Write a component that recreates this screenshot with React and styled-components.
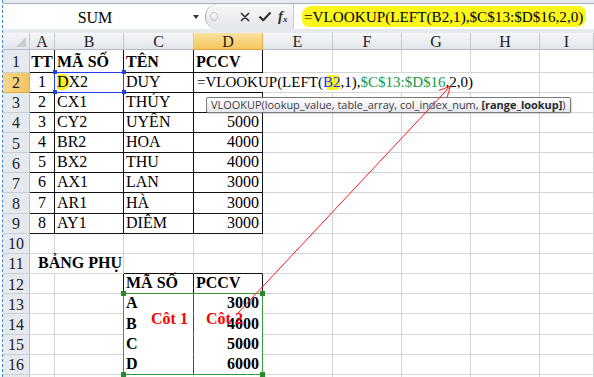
import React from 'react';
import styled, { createGlobalStyle } from 'styled-components';

const Global = createGlobalStyle`
  html, body { margin: 0; padding: 0; background: #fff; }
  body { width: 594px; height: 377px; overflow: hidden; font-family: "Liberation Serif", "Times New Roman", serif; }
`;

const SERIF = '"Liberation Serif", "Times New Roman", serif';
const GRID = '#d4d4d4';
const DARK = '#111';

const Root = styled.div`
  position: relative;
  width: 594px;
  height: 377px;
  overflow: hidden;
  padding-left: 2px;
  box-sizing: border-box;
  background: #fff;
`;

const Frame = styled.div`
  height: 100%;
  border-left: 1px dashed #3d86e0;
  display: flex;
  flex-direction: column;
`;

const FormulaBar = styled.div`
  flex: none;
  height: 33px;
  box-sizing: border-box;
  background: #e7eaee;
  padding: 3px 0 4px;
  display: flex;
`;

const BarRow = styled.div`
  flex: 1;
  display: flex;
  border-top: 1px solid #aab1b9;
  background: #fff;
`;

const NameBox = styled.div`
  width: 202px;
  display: flex;
  align-items: center;
  background: #fff;
`;

const NameText = styled.div`
  flex: 1;
  text-align: center;
  font: 400 16px/1 ${SERIF};
  color: #000;
  padding-top: 2px;
`;

const Drop = styled.div`
  width: 18px;
  display: flex;
  justify-content: center;
  &::before {
    content: '';
    border-left: 3.5px solid transparent;
    border-right: 3.5px solid transparent;
    border-top: 4px solid #333;
  }
`;

const Controls = styled.div`
  width: 88px;
  box-sizing: border-box;
  display: flex;
  align-items: center;
  background: linear-gradient(#f7f8fa, #e3e6ea);
  border-left: 1px solid #a9b0b8;
  border-radius: 12px 0 0 12px;
  padding-left: 4px;
`;

const Grip = styled.div`
  width: 6px;
  height: 7px;
  border-radius: 50%;
  border: 1px solid #c2c6cc;
  background: linear-gradient(#ffffff, #dfe2e6);
  margin-right: 18px;
`;

const IconBtn = styled.div`
  width: ${p => p.$w}px;
  display: flex;
  justify-content: center;
  align-items: center;
`;

const Fx = styled.div`
  font: italic 700 15px/1 ${SERIF};
  color: #333;
  margin-left: 2px;
  sub { font-size: 9px; font-style: italic; vertical-align: -1px; }
`;

const Input = styled.div`
  flex: 1;
  display: flex;
  align-items: center;
  border-left: 1px solid #c6cbd1;
  padding-left: 8px;
`;

const BigMark = styled.span`
  background: #fcf61a;
  border-radius: 9px 7px 9px 7px;
  padding: 2px 3px 1px 2px;
  font: 400 15.2px/18px ${SERIF};
  color: #000;
  white-space: nowrap;
`;

const Sheet = styled.div`
  flex: 1;
  display: grid;
  grid-template-columns: 27px 25px 69px 70px 69px 70px 69px 69px 69px 1fr;
  grid-template-rows: 17px 22.5px repeat(15, 20.17px) 1fr;
  position: relative;
`;

const Corner = styled.div`
  grid-row: 1;
  grid-column: 1;
  position: relative;
  background: linear-gradient(#f3f5f8, #e2e6eb);
  border-right: 1px solid #c4c9d0;
  border-bottom: 1px solid #b4bbc4;
  box-sizing: border-box;
  &::after {
    content: '';
    position: absolute;
    right: 3px;
    bottom: 2px;
    border-left: 10px solid transparent;
    border-bottom: 10px solid #c9ced5;
  }
`;

const ColHead = styled.div`
  grid-row: 1;
  grid-column: ${p => p.$c};
  box-sizing: border-box;
  display: flex;
  align-items: center;
  justify-content: center;
  background: ${p => (p.$active ? 'linear-gradient(#fbe3a0, #f5c55f)' : 'linear-gradient(#f5f7f9, #e2e6eb)')};
  border-right: 1px solid ${p => (p.$active ? '#e0ad4c' : '#c4c9d0')};
  border-bottom: 1px solid ${p => (p.$active ? '#e1a53b' : '#b4bbc4')};
  font: 400 16px/1 ${SERIF};
  color: #222;
  padding-top: 1px;
`;

const RowHead = styled.div`
  grid-row: ${p => p.$r};
  grid-column: 1;
  box-sizing: border-box;
  display: flex;
  align-items: center;
  justify-content: center;
  background: ${p => (p.$active ? 'linear-gradient(90deg, #f8d68a, #f3c463)' : '#e6e9ee')};
  border-right: 1px solid ${p => (p.$active ? '#e0a93f' : '#b7bec7')};
  border-bottom: 1px solid ${p => (p.$active ? '#e0a93f' : '#c9ced5')};
  font: 400 16px/1 ${SERIF};
  color: #222;
  padding-top: 2px;
`;

const Cell = styled.div`
  grid-row: ${p => p.$r};
  grid-column: ${p => p.$c} / span ${p => p.$span || 1};
  box-sizing: border-box;
  border-right: 1px solid ${p => p.$br};
  border-bottom: 1px solid ${p => p.$bb};
  display: flex;
  align-items: flex-end;
  justify-content: ${p => (p.$align === 'right' ? 'flex-end' : p.$align === 'center' ? 'center' : 'flex-start')};
  padding: 0 ${p => (p.$align === 'right' ? 3 : 2)}px 2px ${p => (p.$pl != null ? p.$pl : 2)}px;
  font: ${p => (p.$bold ? 700 : 400)} 16px/1 ${SERIF};
  color: #000;
  white-space: nowrap;
  min-width: 0;
`;

const Mark = styled.span`
  background: #f8f21e;
  border-radius: 3px 6px 6px 3px;
`;

const HalfMark = styled.span`
  color: #1a2ee8;
  background: linear-gradient(90deg, transparent 45%, #f8f21e 45%);
`;

const RefMark = styled.span`
  color: #1a2ee8;
  background: #f8f21e;
  border-radius: 0 4px 4px 0;
`;

const EditBox = styled.div`
  grid-row: 3;
  grid-column: 5 / span 4;
  margin-bottom: 1px;
  position: relative;
  z-index: 2;
  background: #fff;
  display: flex;
  align-items: flex-end;
  padding: 0 0 2px 3px;
  font: 400 15px/1 ${SERIF};
  color: #000;
  white-space: nowrap;
`;

const Ref = styled.span`
  color: ${p => p.$color};
`;

const Caret = styled.span`
  display: inline-block;
  width: 1px;
  height: 16px;
  background: #000;
  margin-left: 1px;
  vertical-align: -3px;
`;

const Tip = styled.div`
  position: absolute;
  left: 12px;
  top: calc(100% + 5px);
  height: 16px;
  box-sizing: border-box;
  padding: 0 4px;
  border: 1px solid #7a7a7a;
  border-radius: 2px;
  background: linear-gradient(#ffffff, #e6e7ef);
  box-shadow: 1px 1px 1px rgba(0, 0, 0, 0.15);
  font: 400 10.95px/14px "Open Sans", "Noto Sans", sans-serif;
  color: #3c3c3c;
  white-space: nowrap;
  b { font-weight: 700; color: #2a2a2a; }
`;

const RangeBox = styled.div`
  grid-row: ${p => p.$r};
  grid-column: ${p => p.$c};
  margin: -1px 0 0 -1px;
  position: relative;
  z-index: 3;
  pointer-events: none;
  box-sizing: border-box;
  border: ${p => p.$w}px solid ${p => p.$color};
`;

const Handle = styled.span`
  position: absolute;
  width: ${p => p.$s}px;
  height: ${p => p.$s}px;
  background: ${p => p.$color};
  ${p => (p.$top ? 'top' : 'bottom')}: ${p => -(p.$s / 2 + 0.5)}px;
  ${p => (p.$left ? 'left' : 'right')}: ${p => -(p.$s / 2 + 0.5)}px;
`;

const Label = styled.div`
  position: absolute;
  left: ${p => p.$x}px;
  top: ${p => p.$y}px;
  z-index: 4;
  font: 700 16px/1 ${SERIF};
  color: #f00;
  white-space: nowrap;
`;

const Overlay = styled.svg`
  position: absolute;
  left: 0;
  top: 0;
  z-index: 6;
  pointer-events: none;
`;

const COLS = ['A', 'B', 'C', 'D', 'E', 'F', 'G', 'H', 'I'];

const data = {
  1: { 1: { t: 'TT', b: 1, al: 'center' }, 2: { t: 'MÃ SỐ', b: 1 }, 3: { t: 'TÊN', b: 1 }, 4: { t: 'PCCV', b: 1 } },
  2: { 1: { t: '1', al: 'center' }, 2: { t: <><Mark>D</Mark>X2</> }, 3: { t: 'DUY' } },
  3: { 1: { t: '2', al: 'center' }, 2: { t: 'CX1' }, 3: { t: 'THỦY' } },
  4: { 1: { t: '3', al: 'center' }, 2: { t: 'CY2' }, 3: { t: 'UYÊN' }, 4: { t: '5000', al: 'right' } },
  5: { 1: { t: '4', al: 'center' }, 2: { t: 'BR2' }, 3: { t: 'HOA' }, 4: { t: '4000', al: 'right' } },
  6: { 1: { t: '5', al: 'center' }, 2: { t: 'BX2' }, 3: { t: 'THU' }, 4: { t: '4000', al: 'right' } },
  7: { 1: { t: '6', al: 'center' }, 2: { t: 'AX1' }, 3: { t: 'LAN' }, 4: { t: '3000', al: 'right' } },
  8: { 1: { t: '7', al: 'center' }, 2: { t: 'AR1' }, 3: { t: 'HÀ' }, 4: { t: '3000', al: 'right' } },
  9: { 1: { t: '8', al: 'center' }, 2: { t: 'AY1' }, 3: { t: 'DIỄM' }, 4: { t: '3000', al: 'right' } },
  11: { 1: { t: 'BẢNG PHỤ', b: 1, span: 2, pl: 8 } },
  12: { 3: { t: 'MÃ SỐ', b: 1 }, 4: { t: 'PCCV', b: 1 } },
  13: { 3: { t: 'A', b: 1 }, 4: { t: '3000', b: 1, al: 'right' } },
  14: { 3: { t: 'B', b: 1 }, 4: { t: '4000', b: 1, al: 'right' } },
  15: { 3: { t: 'C', b: 1 }, 4: { t: '5000', b: 1, al: 'right' } },
  16: { 3: { t: 'D', b: 1 }, 4: { t: '6000', b: 1, al: 'right' } },
};

const boxed = (r, c) => (r >= 1 && r <= 9 && c >= 1 && c <= 4) || (r >= 12 && r <= 16 && c >= 3 && c <= 4);

function borders(r, c, span) {
  const last = c + span - 1;
  let right = boxed(r, last) || boxed(r, last + 1) ? DARK : GRID;
  let bottom = boxed(r, c) || boxed(r + 1, c) ? DARK : GRID;
  if (r >= 13 && r <= 15 && c >= 3 && c <= 4) bottom = '#fff';
  if (r >= 13 && r <= 16 && c === 3) right = '#4a4a4a';
  return { right, bottom };
}

function buildCells() {
  const out = [];
  for (let r = 1; r <= 17; r++) {
    for (let c = 1; c <= 9; c++) {
      if (r === 11 && c === 2) continue;
      const d = (data[r] && data[r][c]) || {};
      const span = d.span || 1;
      const { right, bottom } = borders(r, c, span);
      out.push(
        <Cell
          key={`${r}-${c}`}
          $r={r + 1}
          $c={c + 1}
          $span={span}
          $br={right}
          $bb={bottom}
          $bold={d.b}
          $align={d.al}
          $pl={d.pl}
        >
          {d.t}
        </Cell>
      );
    }
  }
  return out;
}

function Handles({ s, color }) {
  return (
    <>
      <Handle $s={s} $color={color} $top $left />
      <Handle $s={s} $color={color} $top />
      <Handle $s={s} $color={color} $left />
      <Handle $s={s} $color={color} />
    </>
  );
}

export default function App() {
  return (
    <Root>
      <Global />
      <Frame>
        <FormulaBar>
          <BarRow>
            <NameBox>
              <NameText>SUM</NameText>
              <Drop />
            </NameBox>
            <Controls>
              <Grip />
              <IconBtn $w={18}>
                <svg width="10" height="10" viewBox="0 0 10 10">
                  <path d="M1.5 1.5L8.5 8.5M8.5 1.5L1.5 8.5" stroke="#333" strokeWidth="1.7" strokeLinecap="round" />
                </svg>
              </IconBtn>
              <IconBtn $w={22}>
                <svg width="14" height="11" viewBox="0 0 14 11">
                  <path d="M1.5 5.5L5.2 9.2L12.5 1.5" stroke="#333" strokeWidth="2.2" fill="none" strokeLinejoin="round" />
                </svg>
              </IconBtn>
              <Fx>
                f<sub>x</sub>
              </Fx>
            </Controls>
            <Input>
              <BigMark>=VLOOKUP(LEFT(B2,1),$C$13:$D$16,2,0)</BigMark>
            </Input>
          </BarRow>
        </FormulaBar>
        <Sheet>
          <Corner />
          {COLS.map((L, i) => (
            <ColHead key={L} $c={i + 2} $active={L === 'D'}>
              {L}
            </ColHead>
          ))}
          {Array.from({ length: 17 }, (_, i) => (
            <RowHead key={i} $r={i + 2} $active={i === 1}>
              {i < 16 ? i + 1 : ''}
            </RowHead>
          ))}
          {buildCells()}
          <EditBox>
            =VLOOKUP(LEFT(<HalfMark>B</HalfMark>
            <RefMark>2</RefMark>,1),
            <Ref $color="#10994a">$C$13:$D$16</Ref>,2,0)
            <Caret />
            <Tip>
              VLOOKUP(lookup_value, table_array, col_index_num, <b>[range_lookup]</b>)
            </Tip>
          </EditBox>
          <RangeBox $r={3} $c={3} $w={1.5} $color="#2340e6">
            <Handles s={4} color="#2340e6" />
          </RangeBox>
          <RangeBox $r="14 / span 4" $c="4 / span 2" $w={1.5} $color="#3a9a3a">
            <Handles s={5} color="#2a8a2a" />
          </RangeBox>
        </Sheet>
      </Frame>
      <Label $x={151} $y={311}>Côt 1</Label>
      <Label $x={206} $y={311}>Côt 2</Label>
      <Overlay width="594" height="377" viewBox="0 0 594 377">
        <line x1="237" y1="314" x2="450.5" y2="86" stroke="#ff1a1a" strokeWidth="1" />
        <polyline points="439,90.5 450.5,86 447,97.5" fill="none" stroke="#ff1a1a" strokeWidth="1" />
      </Overlay>
    </Root>
  );
}
